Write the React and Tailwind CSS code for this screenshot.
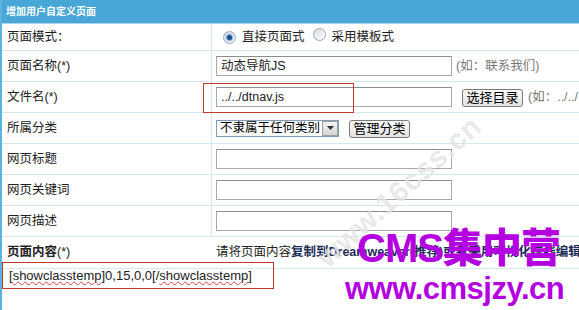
const font = { fontFamily: '"Liberation Sans", "Noto Sans CJK SC", sans-serif' }

function Radio({ checked }) {
  return (
    <span className="inline-flex h-[13px] w-[13px] items-center justify-center rounded-full border border-[#9aa7b3] bg-gradient-to-br from-[#d8dde2] to-[#ffffff]">
      {checked && <span className="h-[5px] w-[5px] rounded-full bg-[#1f4f8a] shadow-[0_0_2px_1px_#6fa0d8]" />}
    </span>
  )
}

function Btn({ children, w }) {
  return (
    <span className={`inline-flex h-[18px] ${w} items-center justify-center rounded-[3px] border border-[#7a7a7a] bg-gradient-to-b from-[#fbfbfb] to-[#e3e3e3] text-[13px] leading-none text-black`}>
      {children}
    </span>
  )
}

function Row({ label, h, children, noDivider }) {
  return (
    <div className={`flex ${h} border-b border-[#d3e8ef]`}>
      <div className={`flex w-[210px] shrink-0 items-center pl-[5px] text-[12.5px] text-[#222] ${noDivider ? '' : 'border-r border-[#d3e8ef]'}`}>
        {label}
      </div>
      <div className="flex min-w-0 flex-1 items-center overflow-hidden pl-[4px] whitespace-nowrap">{children}</div>
    </div>
  )
}

function Input({ value }) {
  return (
    <div className="flex h-[20px] w-[236px] shrink-0 items-center border border-[#a9a9a9] border-t-[#8e8e8e] bg-white pl-[4px] text-[12.5px] text-[#222]">
      {value}
    </div>
  )
}

export default function App() {
  return (
    <div className="relative h-[310px] w-[579px] overflow-hidden bg-white" style={font}>
      <div className="flex h-full flex-col border-l-2 border-[#5eb3de]">
        <div className="flex h-[24px] items-center border-b border-[#a9d6ec] bg-[#48a7d7] pl-[4px] text-[10px] font-bold text-white">
          增加用户自定义页面
        </div>

        <Row label="页面模式：" h="h-[27px]">
          <div className="ml-[7px] flex items-center gap-[6px] text-[12.5px] text-[#222]">
            <Radio checked />
            <span>直接页面式</span>
            <span className="ml-[2px]"><Radio /></span>
            <span>采用模板式</span>
          </div>
        </Row>

        <Row label="页面名称(*)" h="h-[31px]">
          <Input value="动态导航JS" />
          <span className="ml-[4px] text-[12.5px] text-[#777]">(如：联系我们)</span>
        </Row>

        <Row label="文件名(*)" h="h-[31px]">
          <Input value="../../dtnav.js" />
          <span className="ml-[10px]"><Btn w="w-[61px]">选择目录</Btn></span>
          <span className="ml-[5px] text-[12.5px] text-[#777]">(如：../../</span>
        </Row>

        <Row label="所属分类" h="h-[31px]">
          <div className="flex h-[17px] w-[123px] items-center border border-[#7f9db9] bg-white text-[12.5px] text-black">
            <span className="flex-1 pl-[3px]">不隶属于任何类别</span>
            <span className="flex h-[15px] w-[16px] items-center justify-center border border-[#a0a0a0] bg-gradient-to-b from-[#f4f4f4] to-[#d6d6d6]">
              <svg width="7" height="4" viewBox="0 0 7 4"><path d="M0 0h7L3.5 4z" fill="#333" /></svg>
            </span>
          </div>
          <span className="ml-[10px]"><Btn w="w-[61px]">管理分类</Btn></span>
        </Row>

        <Row label="网页标题" h="h-[31px]"><Input value="" /></Row>
        <Row label="网页关键词" h="h-[31px]"><Input value="" /></Row>
        <Row label="网页描述" h="h-[31px]"><Input value="" /></Row>

        <Row label={<><b>页面内容</b><span>(*)</span></>} h="h-[32px]" noDivider>
          <span className="text-[12.5px] text-[#222]">
            请将页面内容<b className="text-[#1c2b55]">复制到Dreamweaver(推荐)或者采用可视化在线编辑进行编辑</b>
          </span>
        </Row>

        <div className="flex-1 pl-[7px] text-[13px] leading-[14px] text-[#222]">
          [<span className="underline decoration-[#e04040] decoration-wavy decoration-1">showclasstemp</span>]0,15,0,0[/<span className="underline decoration-[#e04040] decoration-wavy decoration-1">showclasstemp</span>]
        </div>
      </div>

      {/* annotation boxes */}
      <div className="absolute left-[203px] top-[83px] h-[30px] w-[151px] border border-[#c0392b]" />
      <div className="absolute left-[2px] top-[262px] h-[27px] w-[272px] border border-[#c0392b]" />

      {/* watermarks */}
      <div className="pointer-events-none absolute left-[295px] top-[170px] -rotate-[42deg] text-[29px] font-bold tracking-[1px] text-[#e4e4e4] opacity-80">
        www.16css.cn
      </div>
      <div className="pointer-events-none absolute left-[357px] top-[225px] text-[40px] font-black leading-[46px] tracking-[-1px] text-[#b400e0]">
        CMS集中营
      </div>
      <div className="pointer-events-none absolute left-[345px] top-[271px] text-[31px] font-black leading-[36px] tracking-[-0.5px] text-[#b400e0]">
        www.cmsjzy.cn
      </div>
    </div>
  )
}
